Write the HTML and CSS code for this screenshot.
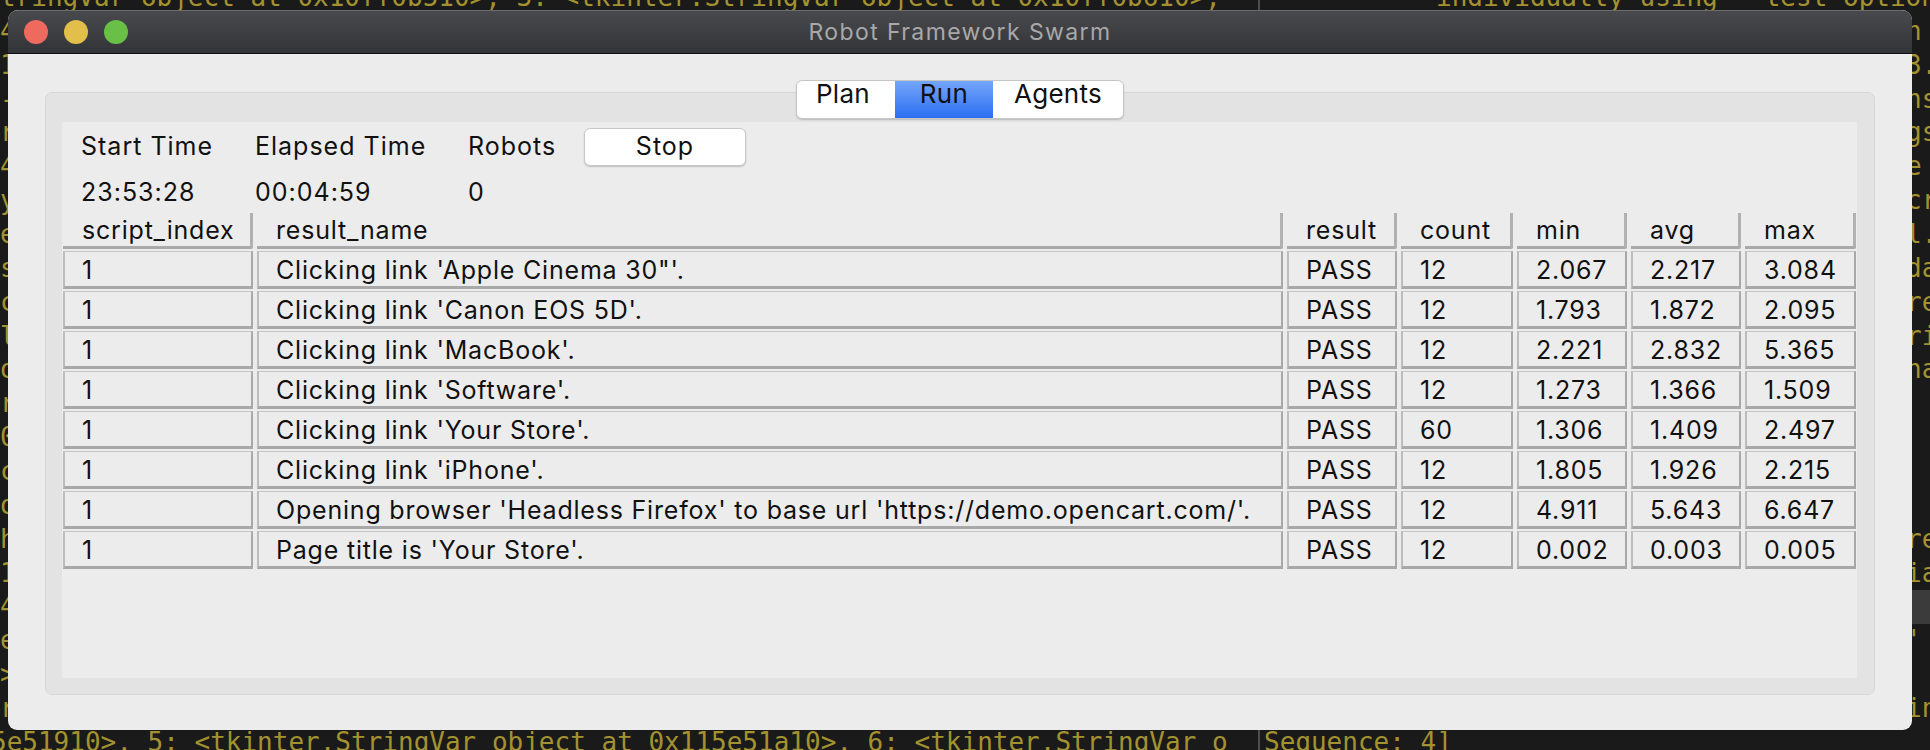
FILE: index.html
```html
<!DOCTYPE html>
<html>
<head>
<meta charset="utf-8">
<title>Robot Framework Swarm</title>
<link rel="stylesheet" href="styles.css">
</head>
<body>
<div class="desktop">
  <div class="term">
    <div class="term-col term-left">
      <div class="tl">tringVar object at 0x10ff0b510>, 3: &lt;tkinter.StringVar object at 0x10ff0b610>,</div>
      <div class="tl">4</div>
      <div class="tl">1</div>
      <div class="tl">-</div>
      <div class="tl">r</div>
      <div class="tl">4</div>
      <div class="tl">y</div>
      <div class="tl">e</div>
      <div class="tl">s</div>
      <div class="tl">c</div>
      <div class="tl">l</div>
      <div class="tl">o</div>
      <div class="tl">r</div>
      <div class="tl">0</div>
      <div class="tl">c</div>
      <div class="tl">o</div>
      <div class="tl">h</div>
      <div class="tl">1</div>
      <div class="tl">4</div>
      <div class="tl">e</div>
      <div class="tl">&gt;</div>
      <div class="tl">r</div>
      <div class="tl shift">5e51910>, 5: &lt;tkinter.StringVar object at 0x115e51a10>, 6: &lt;tkinter.StringVar o</div>
    </div>
    <div class="term-divider"></div>
    <div class="term-col term-right">
      <div class="tl lead">individually using --test option</div>
      <div class="tl edge">n</div>
      <div class="tl edge">3.</div>
      <div class="tl edge">ns</div>
      <div class="tl edge">gs</div>
      <div class="tl edge">e</div>
      <div class="tl edge">cr</div>
      <div class="tl edge">l.</div>
      <div class="tl edge">da</div>
      <div class="tl edge">re</div>
      <div class="tl edge">ri</div>
      <div class="tl edge">na</div>
      <div class="tl"></div>
      <div class="tl"></div>
      <div class="tl"></div>
      <div class="tl"></div>
      <div class="tl edge">re</div>
      <div class="tl edge">ia</div>
      <div class="tl hl"></div>
      <div class="tl edge">'</div>
      <div class="tl"></div>
      <div class="tl edge">in</div>
      <div class="tl">Sequence: 4]</div>
    </div>
  </div>

  <div class="window">
    <div class="titlebar">
      <div class="lights">
        <span class="light red"></span>
        <span class="light yellow"></span>
        <span class="light green"></span>
      </div>
      <div class="title">Robot Framework Swarm</div>
      <div></div>
    </div>
    <div class="content">
      <div class="notebook">
        <div class="tabs">
          <div class="tab tab-plan">Plan</div>
          <div class="tab tab-run active">Run</div>
          <div class="tab tab-agents">Agents</div>
        </div>
        <div class="pane">
          <div class="frame">
            <div class="stats">
              <div class="stat-label">Start Time</div>
              <div class="stat-label">Elapsed Time</div>
              <div class="stat-label">Robots</div>
              <div class="stat-btn"><button class="btn">Stop</button></div>
              <div class="stat-value">23:53:28</div>
              <div class="stat-value">00:04:59</div>
              <div class="stat-value">0</div>
              <div class="stat-value"></div>
            </div>
            <div class="grid">
              <div class="th">script_index</div><div class="th">result_name</div><div class="th">result</div><div class="th">count</div><div class="th">min</div><div class="th">avg</div><div class="th">max</div>

              <div class="td">1</div><div class="td">Clicking link 'Apple Cinema 30"'.</div><div class="td">PASS</div><div class="td">12</div><div class="td">2.067</div><div class="td">2.217</div><div class="td">3.084</div>
              <div class="td">1</div><div class="td">Clicking link 'Canon EOS 5D'.</div><div class="td">PASS</div><div class="td">12</div><div class="td">1.793</div><div class="td">1.872</div><div class="td">2.095</div>
              <div class="td">1</div><div class="td">Clicking link 'MacBook'.</div><div class="td">PASS</div><div class="td">12</div><div class="td">2.221</div><div class="td">2.832</div><div class="td">5.365</div>
              <div class="td">1</div><div class="td">Clicking link 'Software'.</div><div class="td">PASS</div><div class="td">12</div><div class="td">1.273</div><div class="td">1.366</div><div class="td">1.509</div>
              <div class="td">1</div><div class="td">Clicking link 'Your Store'.</div><div class="td">PASS</div><div class="td">60</div><div class="td">1.306</div><div class="td">1.409</div><div class="td">2.497</div>
              <div class="td">1</div><div class="td">Clicking link 'iPhone'.</div><div class="td">PASS</div><div class="td">12</div><div class="td">1.805</div><div class="td">1.926</div><div class="td">2.215</div>
              <div class="td">1</div><div class="td">Opening browser 'Headless Firefox' to base url 'https://demo.opencart.com/'.</div><div class="td">PASS</div><div class="td">12</div><div class="td">4.911</div><div class="td">5.643</div><div class="td">6.647</div>
              <div class="td">1</div><div class="td">Page title is 'Your Store'.</div><div class="td">PASS</div><div class="td">12</div><div class="td">0.002</div><div class="td">0.003</div><div class="td">0.005</div>
            </div>
          </div>
        </div>
      </div>
    </div>
  </div>
</div>
</body>
</html>
```

FILE: styles.css
```css
* { box-sizing: border-box; }
html, body { margin: 0; padding: 0; }
body {
  width: 1930px;
  height: 750px;
  overflow: hidden;
  background: #191919;
  font-family: Inter, "Liberation Sans", sans-serif;
}
.desktop {
  position: relative;
  width: 1930px;
  height: 750px;
  overflow: hidden;
  background: #1a1a1a;
}

/* terminal behind the window */
.term {
  display: flex;
  height: 750px;
  overflow: hidden;
  font-family: "DejaVu Sans Mono", "Liberation Mono", monospace;
  font-size: 26px;
  color: #a3922f;
}
.term-col {
  margin-top: -19px;
  display: flex;
  flex-direction: column;
}
.term-left { width: 1258px; flex: none; }
.term-divider { width: 2px; flex: none; background: #4d4d4d; }
.term-right { flex: 1; padding-left: 4px; }
.tl {
  height: 33.86px;
  flex: none;
  line-height: 33.86px;
  white-space: pre;
}
.tl.shift { margin-left: -9px; }
.tl.lead { padding-left: 172px; }
.tl.edge { padding-left: 642px; }
.tl.hl { background: #3b3b3b; margin-left: 600px; }

/* window */
.window {
  position: absolute;
  left: 8px;
  top: 10px;
  width: 1904px;
  height: 720px;
  border-radius: 10px 10px 9px 9px;
  overflow: hidden;
  background: #ececec;
  display: flex;
  flex-direction: column;
}
.titlebar {
  height: 44px;
  flex: none;
  display: grid;
  grid-template-columns: 1fr auto 1fr;
  align-items: center;
  background: linear-gradient(#48494d, #333438);
  border-top: 1px solid #6b6c70;
  border-bottom: 1px solid #0e0e0e;
}
.lights {
  display: flex;
  gap: 16px;
  padding-left: 16px;
}
.light {
  width: 24px;
  height: 24px;
  border-radius: 50%;
  display: block;
}
.red { background: #ee6a5f; }
.yellow { background: #e2bf4b; }
.green { background: #6abf47; }
.title {
  font-size: 23px;
  line-height: 42px;
  color: #a8a8a9;
  letter-spacing: 1.4px;
}

.content {
  flex: 1;
  display: flex;
  flex-direction: column;
  padding: 26px 37px 35px 37px;
}
.notebook {
  flex: 1;
  display: flex;
  flex-direction: column;
}
.tabs {
  position: relative;
  z-index: 1;
  align-self: center;
  display: flex;
  height: 39px;
  margin-bottom: -27px;
  background: #fff;
  border: 1px solid #c6c6c6;
  border-radius: 6px;
  box-shadow: 0 1px 1.5px rgba(0,0,0,0.18);
}
.tab {
  font-size: 26px;
  line-height: 30px;
  margin-top: -2px;
  height: 37px;
  text-align: center;
  color: #111;
  letter-spacing: 0.3px;
}
.tab-plan { width: 98px; padding-right: 6px; border-radius: 5px 0 0 5px; }
.tab-run { width: 98px; }
.tab-agents { width: 130px; border-radius: 0 5px 5px 0; }
.tab.active {
  margin-top: 0;
  padding-top: 0;
  line-height: 26px;
  background: linear-gradient(#74a5f8, #2d6ff3);
}

.pane {
  flex: 1;
  display: flex;
  flex-direction: column;
  background: #e3e3e3;
  border: 1px solid #d7d7d7;
  border-radius: 7px;
  padding: 29px 17px 16px 16px;
}
.frame {
  flex: 1;
  background: #ececec;
  font-size: 25px;
  color: #111;
  letter-spacing: 0.8px;
}

.stats {
  display: grid;
  grid-template-columns: 174px 213px 114px 163px;
  grid-template-rows: 49px 42px;
  padding-left: 19px;
}
.stat-label { line-height: 49px; letter-spacing: 1px; }
.stat-value { line-height: 42px; letter-spacing: 1px; }
.stat-btn { padding-top: 6px; margin-left: 2px; }
.btn {
  display: block;
  width: 162px;
  height: 38px;
  font: inherit;
  letter-spacing: 1px;
  line-height: 34px;
  padding: 0 0 2px 0;
  color: #111;
  background: #fff;
  border: 1px solid #c9c9c9;
  border-radius: 6px;
  box-shadow: 0 1px 1.5px rgba(0,0,0,0.2);
}

.grid {
  display: grid;
  grid-template-columns: 190px 1026px 110px 112px 110px 110px 111px;
  grid-template-rows: 36px;
  grid-auto-rows: 38px;
  column-gap: 4px;
  row-gap: 2px;
  padding-left: 1px;
}
.th {
  padding: 1px 0 0 19px;
  line-height: 32px;
  border-right: 3px solid #b1b1b1;
  border-bottom: 3px solid #a9a9a9;
  border-bottom-right-radius: 2px;
  white-space: nowrap;
}
.td {
  padding: 3px 0 0 17px;
  line-height: 31px;
  border-top: 1px solid #c4c4c4;
  border-left: 2px solid #bcbcbc;
  border-right: 2px solid #a8a8a8;
  border-bottom: 3px solid #a8a8a8;
  white-space: nowrap;
}
```
